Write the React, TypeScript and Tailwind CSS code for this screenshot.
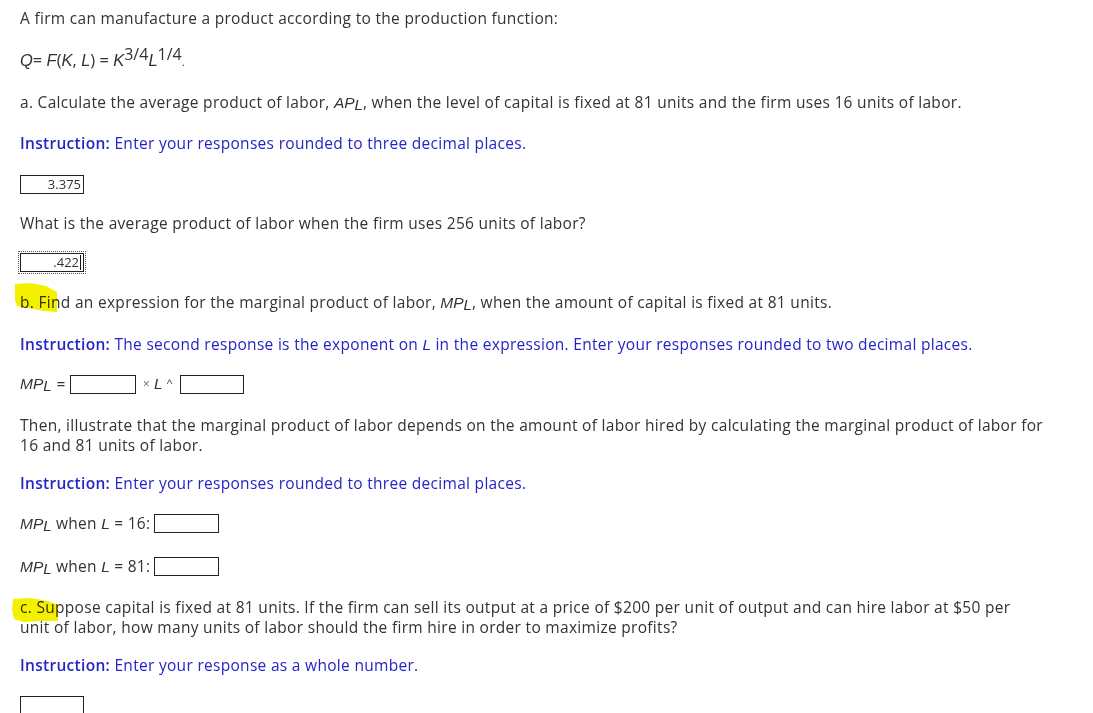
import React from 'react'

const blue = 'text-[#2424c8]'

function Box({ w = 'w-[64px]', value = '', focus = false }: { w?: string; value?: string; focus?: boolean }) {
  return (
    <span
      className={`inline-flex h-[19px] ${w} items-center justify-end border border-[#222] bg-white pr-[2px] text-[13px] leading-none tracking-normal text-[#333] align-middle ${
        focus ? 'outline outline-1 outline-dotted outline-[#555] outline-offset-[1px]' : ''
      }`}
    >
      {value}
      {focus && <span className="ml-[1px] inline-block h-[15px] w-px bg-[#111]" />}
    </span>
  )
}

const M = ({ children }: { children: React.ReactNode }) => (
  <i className="font-['Liberation_Sans',sans-serif] italic tracking-normal">{children}</i>
)

const Sub = ({ children }: { children: React.ReactNode }) => (
  <sub className="relative top-[2px] align-baseline text-[15px] leading-[0]">{children}</sub>
)

const Sup = ({ children }: { children: React.ReactNode }) => (
  <sup className="relative -top-[6px] align-baseline text-[16px] leading-[0]">{children}</sup>
)

const MPL = () => (
  <M>
    MP<Sub>L</Sub>
  </M>
)

function Instruction({ children }: { children: React.ReactNode }) {
  return (
    <p className={blue}>
      <b className="font-semibold">Instruction:</b> {children}
    </p>
  )
}

// marker strokes drawn over the page
function Highlights() {
  return (
    <svg className="pointer-events-none absolute left-0 top-0 mix-blend-multiply" width="100" height="713">
      <polygon points="15,284 30,283 46,286 57,292 57,312 44,311 28,308 17,306 15,300" fill="#f3f000" />
      <polygon points="13,599 30,598 48,601 58,605 58,621 40,621 24,622 14,619 12,610" fill="#f3f000" />
    </svg>
  )
}

export default function App() {
  return (
    <div className="relative min-h-[713px] bg-white px-[20px] pt-[8px] font-['Open_Sans',sans-serif] text-[15.5px] leading-[20px] tracking-[0.3px] text-[#333]">
      <p>A firm can manufacture a product according to the production function:</p>

      <p className="mt-[22px] h-[20px] text-[16.5px] tracking-normal">
        <M>Q</M>= <M>F</M>(<M>K</M>, <M>L</M>) = <M>K</M>
        <Sup>3/4</Sup>
        <M>L</M>
        <Sup>1/4</Sup>
        <span className="text-[11px]">.</span>
      </p>

      <p className="mt-[22px]">
        a. Calculate the average product of labor, <M>AP<Sub>L</Sub></M>, when the level of capital is fixed at 81 units and the firm uses 16 units of labor.
      </p>

      <div className="mt-[20px]">
        <Instruction>Enter your responses rounded to three decimal places.</Instruction>
      </div>

      <div className="mt-[22px] flex h-[19px]">
        <Box value="3.375" />
      </div>

      <p className="mt-[19px]">What is the average product of labor when the firm uses 256 units of labor?</p>

      <div className="mt-[20px] flex h-[19px]">
        <Box value=".422" focus />
      </div>

      <p className="relative mt-[20px]">
        b. Find an expression for the marginal product of labor, <MPL />, when the amount of capital is fixed at 81 units.
      </p>

      <div className="mt-[21px]">
        <Instruction>
          The second response is the exponent on <M>L</M> in the expression. Enter your responses rounded to two decimal places.
        </Instruction>
      </div>

      <div className="mt-[19px] flex h-[19px] items-center">
        <MPL />
        <span className="ml-[5px]">=</span>
        <span className="ml-[4px]">
          <Box w="w-[66px]" />
        </span>
        <span className="ml-[7px] font-['Liberation_Sans',sans-serif] text-[12px] text-[#777]">×</span>
        <span className="ml-[4px]">
          <M>L</M>
        </span>
        <span className="ml-[4px] font-['Liberation_Sans',sans-serif] text-[12px] text-[#555]">^</span>
        <span className="ml-[7px]">
          <Box w="w-[64px]" />
        </span>
      </div>

      <p className="mt-[22px]">
        Then, illustrate that the marginal product of labor depends on the amount of labor hired by calculating the marginal product of labor for
        <br />
        16 and 81 units of labor.
      </p>

      <div className="mt-[18px]">
        <Instruction>Enter your responses rounded to three decimal places.</Instruction>
      </div>

      <div className="mt-[20px] flex h-[20px] items-center gap-[4px]">
        <span>
          <MPL /> when <M>L</M> = 16:
        </span>
        <Box w="w-[65px]" />
      </div>

      <div className="mt-[23px] flex h-[20px] items-center gap-[4px]">
        <span>
          <MPL /> when <M>L</M> = 81:
        </span>
        <Box w="w-[65px]" />
      </div>

      <p className="mt-[21px]">
        c. Suppose capital is fixed at 81 units. If the firm can sell its output at a price of $200 per unit of output and can hire labor at $50 per
        <br />
        unit of labor, how many units of labor should the firm hire in order to maximize profits?
      </p>

      <div className="mt-[18px]">
        <Instruction>Enter your response as a whole number.</Instruction>
      </div>

      <div className="mt-[21px] flex h-[20px]">
        <Box />
      </div>

      <Highlights />
    </div>
  )
}
